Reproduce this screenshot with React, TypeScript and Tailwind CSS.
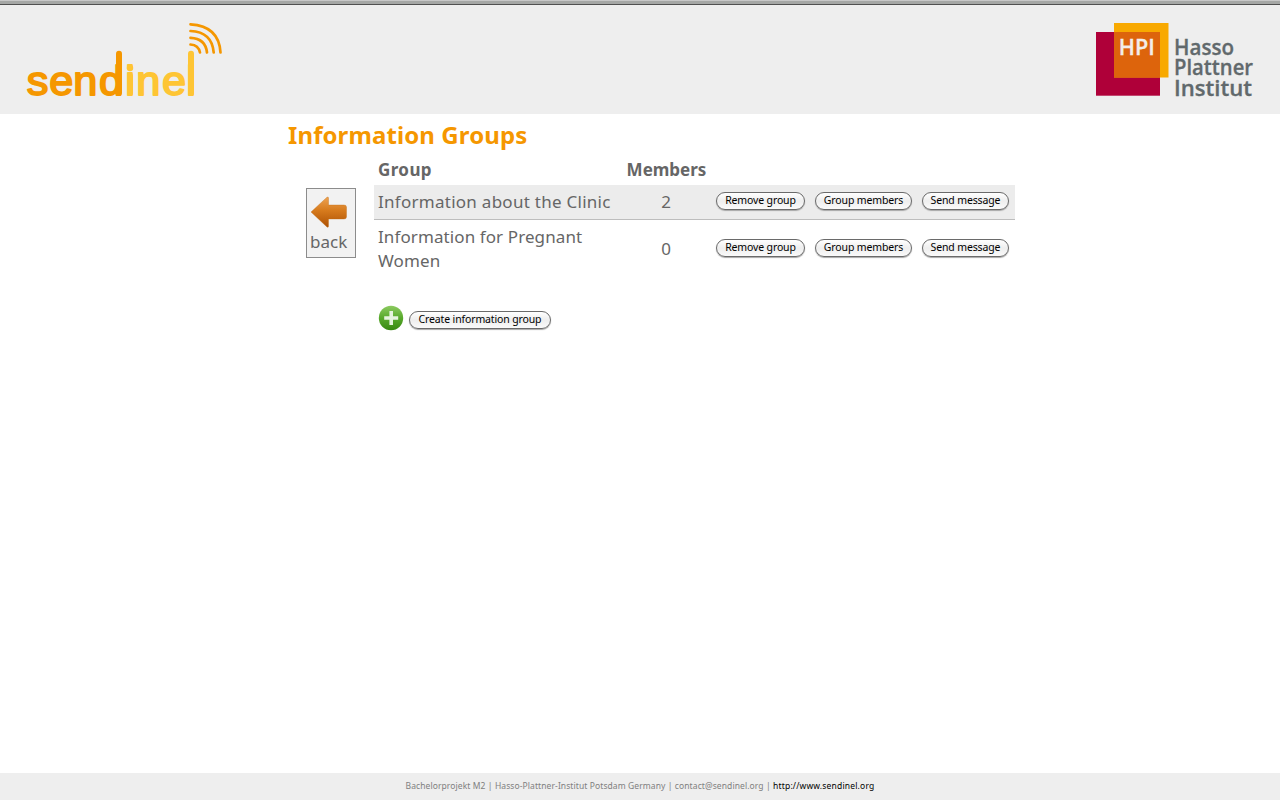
import React from "react";

function SendinelLogo() {
  return (
    <svg width="200" height="80" viewBox="24 20 200 80" className="block overflow-visible">
      <g transform="scale(1.07 1)" fontFamily="Liberation Sans, Arial, sans-serif" fontSize="40.500" strokeWidth="1.800" strokeLinejoin="round">
        <text y="94.700" x="24.9 46 68.5 92.6" fill="#f59700" stroke="#f59700">send</text>
        <text y="94.700" x="117 127.4 151.5 174" fill="#fec534" stroke="#fec534">inel</text>
      </g>
      <path d="M119 53.700V93" stroke="#f59700" strokeWidth="6" strokeLinecap="round" />
      <path d="M191 53.700V93" stroke="#fec534" strokeWidth="6" strokeLinecap="round" />
      <path d="M130 76V93" stroke="#fec534" strokeWidth="6" strokeLinecap="round" />
      <circle cx="130" cy="68" r="3.2" fill="#fec534" />
      <path d="M190.500 44.500Q198.500 45 200 52.500M190.500 37.800Q205.500 38.500 207 52.500M190.500 31Q212 32 213.700 52.500M190.500 24.300Q219 26 220.500 52.500" fill="none" stroke="#f59700" strokeWidth="2.700" strokeLinecap="round" />
    </svg>
  );
}

function HpiLogo() {
  return (
    <svg width="160" height="76" viewBox="1095 22 160 76" className="block overflow-visible">
      <rect x="1096" y="32" width="64" height="63.700" fill="#af0039" />
      <rect x="1114" y="23" width="54.500" height="54.500" fill="#f8a900" />
      <rect x="1114" y="32" width="46" height="45.500" fill="#dd640c" />
      <g fontFamily="Open Sans, sans-serif" fontWeight="600" strokeWidth=".3">
        <text x="1118.800" y="54.800" fontSize="21.500" textLength="36" lengthAdjust="spacingAndGlyphs" fill="#f3eee9" stroke="#f3eee9">HPI</text>
        <g fontSize="21" fill="#61696c" stroke="#61696c">
          <text x="1174" y="54.500" textLength="60" lengthAdjust="spacingAndGlyphs">Hasso</text>
          <text x="1174" y="74.800" textLength="79" lengthAdjust="spacingAndGlyphs">Plattner</text>
          <text x="1174" y="95.500" textLength="78" lengthAdjust="spacingAndGlyphs">Institut</text>
        </g>
      </g>
    </svg>
  );
}

function BackArrow() {
  return (
    <svg width="38" height="33" viewBox="0 0 38 33" className="block">
      <defs>
        <linearGradient id="arrow" x1="0" y1="0" x2="0" y2="1">
          <stop offset="0" stopColor="#eda252" />
          <stop offset=".45" stopColor="#d67a1c" />
          <stop offset="1" stopColor="#ad5104" />
        </linearGradient>
      </defs>
      <path d="M1 16 17 1.200Q18.500.5 18.500 2V9H34Q36.500 9 36.500 11V21Q36.500 23 34 23H18.500V30Q18.500 32 17 31Z" fill="url(#arrow)" stroke="#bd680f" strokeOpacity=".5" strokeWidth=".7" />
    </svg>
  );
}

function PlusIcon() {
  return (
    <svg width="26" height="26" viewBox="0 0 26 26" className="block">
      <defs>
        <linearGradient id="plus" x1="0" y1="0" x2="0" y2="1">
          <stop offset="0" stopColor="#8cca60" />
          <stop offset=".5" stopColor="#58a92c" />
          <stop offset="1" stopColor="#388811" />
        </linearGradient>
      </defs>
      <circle cx="13" cy="13" r="12.200" fill="url(#plus)" />
      <path d="M13.200 6V20M6.200 13H20.200" stroke="#e6f3df" strokeWidth="3.600" />
    </svg>
  );
}

function PillButton({ label, width }: { label: string; width: string }) {
  return (
    <button
      className={`${width} flex h-[18px] shrink-0 items-center justify-center rounded-full border border-[#6a6a6a] bg-linear-to-b from-white via-[#eeeeee] to-[#fafafa] pb-px font-['Noto_Sans',sans-serif] text-[10.5px] leading-none tracking-[-0.14px] whitespace-nowrap text-black shadow-[0_1px_1px_#a8a8a8]`}
    >
      {label}
    </button>
  );
}

function RowActions() {
  return (
    <div className="flex w-[298px] items-center gap-[10px]">
      <PillButton label="Remove group" width="w-[89px]" />
      <PillButton label="Group members" width="w-[97px]" />
      <PillButton label="Send message" width="w-[87px]" />
    </div>
  );
}

export default function App() {
  return (
    <div className="flex h-[800px] w-[1280px] flex-col overflow-hidden bg-white font-['Noto_Sans',sans-serif] text-[17px] leading-6 text-[#666666]">
      <div className="h-[5px] shrink-0 border-t border-b border-t-[#c8c8c8] border-b-[#505050] bg-[#a5a7a5]" />
      <header className="flex h-[109px] shrink-0 items-start justify-between bg-[#eeeeee] pt-[15px] pr-[25px] pl-6">
        <SendinelLogo />
        <div className="pt-[2px]"><HpiLogo /></div>
      </header>

      <main className="flex-1 pl-[288px]">
        <h1 className="h-[43px] pt-[5px] text-[24px] leading-8 font-bold tracking-[0.1px] text-[#f59700]">Information Groups</h1>
        <div className="flex items-start">
          <a className="mt-[31px] ml-[18px] flex h-[70px] w-[50px] flex-col border border-[#8c8c8c] bg-[#f2f2f2] pt-[7px] pl-[3px]">
            <BackArrow />
            <span className="mt-px leading-6">back</span>
          </a>
          <section className="ml-[18px] w-[641px]">
            <div className="flex h-7 items-center pb-[3px] font-bold">
              <span className="w-[248px] pl-[4px] tracking-[0.4px]">Group</span>
              <span className="w-[88px] pl-px text-center">Members</span>
            </div>
            <div className="flex h-[35px] items-center border-b border-[#bdbdbd] bg-[#ececec]">
              <span className="w-[248px] pl-[4px] tracking-[0.27px] whitespace-nowrap">Information about the Clinic</span>
              <span className="w-[88px] text-center">2</span>
              <div className="w-[305px] pb-[2px] pl-[6px]"><RowActions /></div>
            </div>
            <div className="flex h-[58px] items-center">
              <span className="w-[248px] pl-[4px] tracking-[0.1px]">Information for Pregnant<br />Women</span>
              <span className="w-[88px] text-center">0</span>
              <div className="w-[305px] pb-[2px] pl-[6px]"><RowActions /></div>
            </div>
            <div className="mt-[27px] flex items-center gap-[5px] pl-[4px]">
              <PlusIcon />
              <div className="pt-[3px]"><PillButton label="Create information group" width="w-[142px]" /></div>
            </div>
          </section>
        </div>
      </main>

      <footer className="flex h-[27px] shrink-0 items-center justify-center bg-[#eeeeee] pb-px text-[8.5px] whitespace-pre text-[#808080]">
        <span className="tracking-[0.09px]">Bachelorprojekt M2 | Hasso-Plattner-Institut Potsdam Germany | contact@sendinel.org | </span>
        <a className="tracking-[0.19px] text-black">http://www.sendinel.org</a>
      </footer>
    </div>
  );
}
